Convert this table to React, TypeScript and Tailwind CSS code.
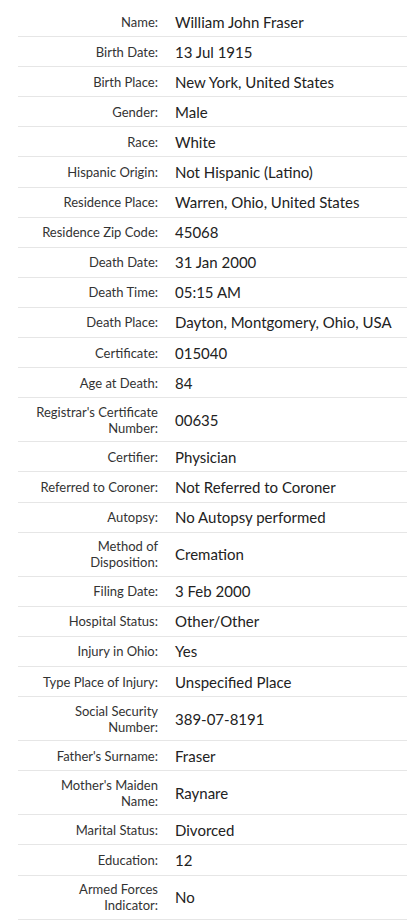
const rows: [string[], string][] = [
  [["Name:"], "William John Fraser"],
  [["Birth Date:"], "13 Jul 1915"],
  [["Birth Place:"], "New York, United States"],
  [["Gender:"], "Male"],
  [["Race:"], "White"],
  [["Hispanic Origin:"], "Not Hispanic (Latino)"],
  [["Residence Place:"], "Warren, Ohio, United States"],
  [["Residence Zip Code:"], "45068"],
  [["Death Date:"], "31 Jan 2000"],
  [["Death Time:"], "05:15 AM"],
  [["Death Place:"], "Dayton, Montgomery, Ohio, USA"],
  [["Certificate:"], "015040"],
  [["Age at Death:"], "84"],
  [["Registrar's Certificate", "Number:"], "00635"],
  [["Certifier:"], "Physician"],
  [["Referred to Coroner:"], "Not Referred to Coroner"],
  [["Autopsy:"], "No Autopsy performed"],
  [["Method of", "Disposition:"], "Cremation"],
  [["Filing Date:"], "3 Feb 2000"],
  [["Hospital Status:"], "Other/Other"],
  [["Injury in Ohio:"], "Yes"],
  [["Type Place of Injury:"], "Unspecified Place"],
  [["Social Security", "Number:"], "389-07-8191"],
  [["Father's Surname:"], "Fraser"],
  [["Mother's Maiden", "Name:"], "Raynare"],
  [["Marital Status:"], "Divorced"],
  [["Education:"], "12"],
  [["Armed Forces", "Indicator:"], "No"],
];

const App = () => {
  return (
    <div className="w-full min-h-screen bg-white pt-[7px] pl-[18px] pr-[6px] font-['Lato',sans-serif]">
      {rows.map(([label, value]) => (
        <div
          key={label.join(" ")}
          className="flex items-center border-b border-[#e6e6e6] py-[5.55px]"
        >
          <div className="w-[140px] shrink-0 text-right text-[13px] leading-4 text-[#333] whitespace-nowrap">
            {label.map((line) => (
              <div key={line}>{line}</div>
            ))}
          </div>
          <div className="pl-[17px] text-[15px] leading-[18px] text-[#222]">
            {value}
          </div>
        </div>
      ))}
    </div>
  );
};

export default App;
